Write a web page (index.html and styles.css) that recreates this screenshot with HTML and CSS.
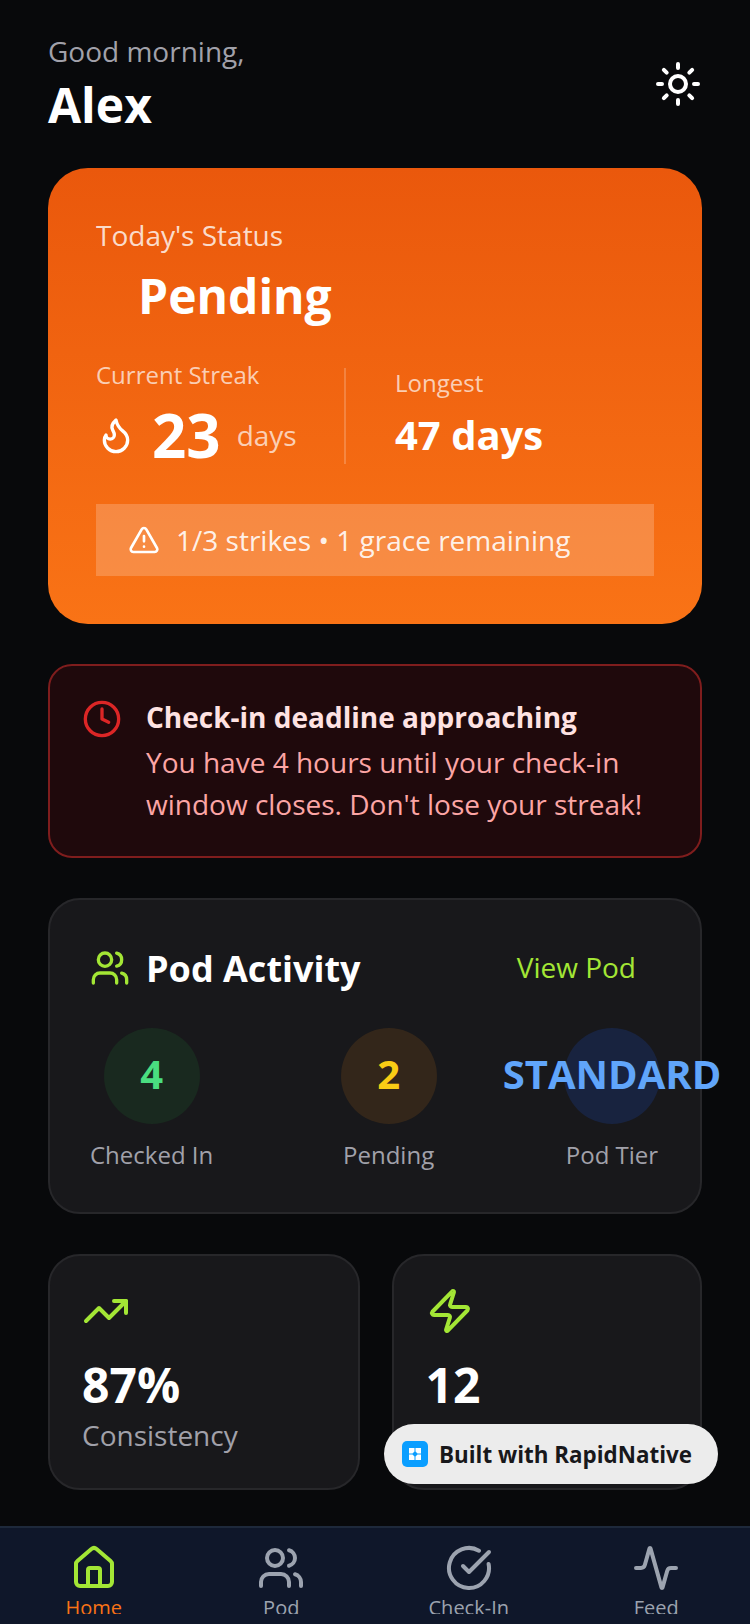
FILE: index.html
```html
<!DOCTYPE html>
<html lang="en">
<head>
    <meta charset="UTF-8">
    <meta name="viewport" content="width=device-width, initial-scale=1.0">
    <title>Home</title>
    <link rel="stylesheet" href="styles.css">
</head>
<body>
    <div class="screen">
        <div class="content">
            <!-- Greeting -->
            <div class="header">
                <div>
                    <div class="greeting">Good morning,</div>
                    <div class="name">Alex</div>
                </div>
                <svg class="icon sun" viewBox="0 0 24 24"><circle cx="12" cy="12" r="4"/><path d="M12 2v2M12 20v2M4.93 4.93l1.41 1.41M17.66 17.66l1.41 1.41M2 12h2M20 12h2M6.34 17.66l-1.41 1.41M19.07 4.93l-1.41 1.41"/></svg>
            </div>

            <!-- Status card -->
            <div class="status-card">
                <div class="status-label">Today's Status</div>
                <div class="status-value">Pending</div>
                <div class="streak-row">
                    <div class="streak-current">
                        <div class="streak-label">Current Streak</div>
                        <div class="streak-count">
                            <svg class="icon flame" viewBox="0 0 24 24"><path d="M8.5 14.5A2.5 2.5 0 0 0 11 12c0-1.38-.5-2-1-3-1.072-2.143-.224-4.054 2-6 .5 2.5 2 4.9 4 6.5 2 1.6 3 3.5 3 5.5a7 7 0 1 1-14 0c0-1.153.433-2.294 1-3a2.5 2.5 0 0 0 2.5 2.5z"/></svg>
                            <span class="streak-number">23</span>
                            <span class="streak-unit">days</span>
                        </div>
                    </div>
                    <div class="streak-longest">
                        <div class="streak-label">Longest</div>
                        <div class="longest-value">47 days</div>
                    </div>
                </div>
                <div class="strikes">
                    <svg class="icon strikes-icon" viewBox="0 0 24 24"><path d="m21.73 18-8-14a2 2 0 0 0-3.48 0l-8 14A2 2 0 0 0 4 21h16a2 2 0 0 0 1.73-3"/><path d="M12 9v4M12 17h.01"/></svg>
                    <span>1/3 strikes • 1 grace remaining</span>
                </div>
            </div>

            <!-- Deadline warning -->
            <div class="alert">
                <svg class="icon clock" viewBox="0 0 24 24"><circle cx="12" cy="12" r="10"/><path d="M12 6v6l4 2"/></svg>
                <div>
                    <div class="alert-title">Check-in deadline approaching</div>
                    <div class="alert-text">You have 4 hours until your check-in window closes. Don't lose your streak!</div>
                </div>
            </div>

            <!-- Pod activity -->
            <div class="card pod-card">
                <div class="pod-header">
                    <div class="pod-title">
                        <svg class="icon lime users-small" viewBox="0 0 24 24"><path d="M16 21v-2a4 4 0 0 0-4-4H6a4 4 0 0 0-4 4v2"/><path d="M16 3.128a4 4 0 0 1 0 7.744"/><path d="M22 21v-2a4 4 0 0 0-3-3.87"/><circle cx="9" cy="7" r="4"/></svg>
                        <span>Pod Activity</span>
                    </div>
                    <span class="view-pod">View Pod</span>
                </div>
                <div class="pod-stats">
                    <div class="pod-stat">
                        <div class="circle circle-green">4</div>
                        <div class="pod-stat-label">Checked In</div>
                    </div>
                    <div class="pod-stat">
                        <div class="circle circle-yellow">2</div>
                        <div class="pod-stat-label">Pending</div>
                    </div>
                    <div class="pod-stat">
                        <div class="circle circle-blue">STANDARD</div>
                        <div class="pod-stat-label">Pod Tier</div>
                    </div>
                </div>
            </div>

            <!-- Small stats -->
            <div class="stat-row">
                <div class="card stat-card">
                    <svg class="icon lime stat-icon" viewBox="0 0 24 24"><path d="M16 7h6v6"/><path d="m22 7-8.5 8.5-5-5L2 17"/></svg>
                    <div class="stat-value">87%</div>
                    <div class="stat-label">Consistency</div>
                </div>
                <div class="card stat-card">
                    <svg class="icon lime stat-icon" viewBox="0 0 24 24"><path d="M4 14a1 1 0 0 1-.78-1.63l9.9-10.2a.5.5 0 0 1 .86.46l-1.92 6.02A1 1 0 0 0 13 10h7a1 1 0 0 1 .78 1.63l-9.9 10.2a.5.5 0 0 1-.86-.46l1.92-6.02A1 1 0 0 0 11 14z"/></svg>
                    <div class="stat-value">12</div>
                </div>
            </div>
        </div>

        <!-- Tab bar -->
        <div class="tabbar">
            <div class="tab tab-active">
                <svg class="icon tab-icon" viewBox="0 0 24 24"><path d="M15 21v-8a1 1 0 0 0-1-1h-4a1 1 0 0 0-1 1v8"/><path d="M3 10a2 2 0 0 1 .709-1.528l7-5.999a2 2 0 0 1 2.582 0l7 5.999A2 2 0 0 1 21 10v9a2 2 0 0 1-2 2H5a2 2 0 0 1-2-2z"/></svg>
                <div class="tab-label">Home</div>
            </div>
            <div class="tab">
                <svg class="icon tab-icon" viewBox="0 0 24 24"><path d="M16 21v-2a4 4 0 0 0-4-4H6a4 4 0 0 0-4 4v2"/><path d="M16 3.128a4 4 0 0 1 0 7.744"/><path d="M22 21v-2a4 4 0 0 0-3-3.87"/><circle cx="9" cy="7" r="4"/></svg>
                <div class="tab-label">Pod</div>
            </div>
            <div class="tab">
                <svg class="icon tab-icon" viewBox="0 0 24 24"><path d="M21.801 10A10 10 0 1 1 17 3.335"/><path d="m9 11 3 3L22 4"/></svg>
                <div class="tab-label">Check-In</div>
            </div>
            <div class="tab">
                <svg class="icon tab-icon" viewBox="0 0 24 24"><path d="M22 12h-2.48a2 2 0 0 0-1.93 1.46l-2.35 8.36a.25.25 0 0 1-.48 0L9.24 2.18a.25.25 0 0 0-.48 0l-2.35 8.36A2 2 0 0 1 4.49 12H2"/></svg>
                <div class="tab-label">Feed</div>
            </div>
        </div>

        <!-- Floating badge -->
        <div class="badge">
            <svg class="badge-logo" viewBox="0 0 26 26"><rect width="26" height="26" rx="5" fill="#0a9eff"/><path d="M7 7h5.500v3.500l-2 2H7zM13.500 7H19v5.500h-3.500l-2-2zM7 13.500h3.500l2 2V19H7zM15.500 13.500H19V19h-5.500v-3.500z" fill="#fff"/></svg>
            <span>Built with RapidNative</span>
        </div>
    </div>
</body>
</html>
```

FILE: styles.css
```css
* {
    box-sizing: border-box;
}
html, body {
    margin: 0;
    padding: 0;
}
body {
    font-family: "Open Sans", Arial, sans-serif;
    background-color: #08090b;
    color: #fff;
}
.screen {
    position: relative;
    width: 750px;
    height: 1624px;
    overflow: hidden;
    display: flex;
    flex-direction: column;
}
.content {
    flex: 1;
    min-height: 0;
    overflow: hidden;
    padding: 32px 48px 0;
}
.icon {
    fill: none;
    stroke: currentColor;
    stroke-width: 2;
    stroke-linecap: round;
    stroke-linejoin: round;
    flex-shrink: 0;
}
.lime {
    color: #a3e635;
}

/* header */
.header {
    display: flex;
    justify-content: space-between;
    align-items: center;
    height: 104px;
    margin-bottom: 32px;
}
.greeting {
    font-size: 28px;
    line-height: 38px;
    margin-bottom: 3px;
    color: #a1a1aa;
}
.name {
    font-size: 48px;
    line-height: 64px;
    font-weight: 700;
}
.sun {
    width: 48px;
    height: 48px;
}

/* status card */
.status-card {
    height: 456px;
    padding: 48px;
    border-radius: 40px;
    background: linear-gradient(180deg, #ea580c, #f97316);
    margin-bottom: 40px;
}
.status-label {
    font-size: 28px;
    line-height: 38px;
    color: rgba(255, 255, 255, 0.8);
}
.status-value {
    font-size: 48px;
    line-height: 64px;
    font-weight: 700;
    padding-left: 42px;
    margin-top: 10px;
    margin-bottom: 32px;
}
.streak-row {
    display: flex;
    align-items: center;
    height: 112px;
    margin-bottom: 32px;
}
.streak-current {
    align-self: flex-start;
    width: 248px;
    margin-top: -1px;
}
.streak-label {
    font-size: 24px;
    line-height: 32px;
    color: rgba(255, 255, 255, 0.7);
}
.streak-count {
    display: flex;
    align-items: center;
    height: 70px;
    margin-top: 9px;
}
.flame {
    width: 40px;
    height: 40px;
    margin-right: 16px;
}
.streak-number {
    font-size: 60px;
    line-height: 64px;
    font-weight: 700;
    margin-right: 16px;
}
.streak-unit {
    font-size: 28px;
    color: rgba(255, 255, 255, 0.7);
}
.streak-longest {
    border-left: 2px solid rgba(255, 255, 255, 0.2);
    padding-left: 49px;
    height: 96px;
}
.streak-longest .streak-label {
    margin-top: -1px;
}
.longest-value {
    font-size: 40px;
    line-height: 56px;
    font-weight: 700;
    margin-top: 8px;
}
.strikes {
    display: flex;
    align-items: center;
    gap: 16px;
    height: 72px;
    padding: 0 32px;
    font-size: 28px;
    background-color: rgba(255, 255, 255, 0.2);
    color: rgba(255, 255, 255, 0.9);
}
.strikes-icon {
    width: 32px;
    height: 32px;
    color: #fff;
}

/* deadline alert */
.alert {
    display: flex;
    gap: 24px;
    height: 194px;
    padding: 31px 32px;
    border: 2px solid #7f1d1d;
    border-radius: 24px;
    background-color: #1f090c;
    margin-bottom: 40px;
}
.clock {
    width: 40px;
    height: 40px;
    color: #dc2626;
    margin-top: 2px;
}
.alert-title {
    font-size: 28px;
    line-height: 40px;
    font-weight: 700;
    color: #fee2e2;
}
.alert-text {
    font-size: 28px;
    line-height: 42px;
    color: #fca5a5;
    margin-top: 4px;
}

/* cards */
.card {
    background-color: #18181b;
    border: 2px solid #27272a;
    border-radius: 32px;
}
.pod-card {
    height: 316px;
    padding: 42px 40px 0;
    margin-bottom: 40px;
}
.pod-header {
    display: flex;
    justify-content: space-between;
    align-items: center;
    padding-right: 24px;
    height: 52px;
    margin-bottom: 34px;
}
.pod-title {
    display: flex;
    align-items: center;
    gap: 16px;
    font-size: 36px;
    font-weight: 700;
}
.users-small {
    width: 40px;
    height: 40px;
}
.view-pod {
    font-size: 28px;
    margin-bottom: 2px;
    color: #a3e635;
}
.pod-stats {
    display: flex;
    justify-content: space-between;
}
.pod-stat {
    display: flex;
    flex-direction: column;
    align-items: center;
}
.circle {
    display: flex;
    justify-content: center;
    align-items: center;
    width: 96px;
    height: 96px;
    padding-bottom: 5px;
    border-radius: 50%;
    font-size: 40px;
    font-weight: 700;
    white-space: nowrap;
}
.circle-green {
    background-color: #19291f;
    color: #4ade80;
}
.circle-yellow {
    background-color: #33261a;
    color: #facc15;
}
.circle-blue {
    background-color: #18233f;
    color: #60a5fa;
}
.pod-stat-label {
    font-size: 24px;
    line-height: 32px;
    color: #a1a1aa;
    margin-top: 15px;
}

/* small stat cards */
.stat-row {
    display: grid;
    grid-template-columns: 311.5px 310.5px;
    gap: 32px;
}
.stat-card {
    height: 236px;
    padding: 31px 32px;
}
.stat-icon {
    display: block;
    width: 48px;
    height: 48px;
    margin-bottom: 20px;
}
.stat-value {
    font-size: 48px;
    line-height: 60px;
    font-weight: 700;
}
.stat-label {
    font-size: 28px;
    line-height: 40px;
    color: #a1a1aa;
}

/* tab bar */
.tabbar {
    display: flex;
    height: 98px;
    flex-shrink: 0;
    background-color: #0f172a;
    border-top: 2px solid #1e293b;
}
.tab {
    flex: 1;
    display: flex;
    flex-direction: column;
    align-items: center;
    padding-top: 16px;
    color: #9ca3af;
}
.tab-active {
    color: #a3e635;
}
.tab-icon {
    width: 48px;
    height: 48px;
}
.tab-label {
    height: 22px;
    overflow: hidden;
    font-size: 20px;
    line-height: 32px;
    color: #9ca3af;
}
.tab-active .tab-label {
    color: #f97316;
}

/* floating badge */
.badge {
    position: absolute;
    left: 384px;
    top: 1424px;
    width: 334px;
    height: 60px;
    display: flex;
    align-items: center;
    gap: 11px;
    padding-left: 18px;
    border-radius: 30px;
    background-color: #ececec;
    color: #18181b;
    font-size: 22.4px;
    font-weight: 700;
}
.badge-logo {
    width: 26px;
    height: 26px;
}
```
